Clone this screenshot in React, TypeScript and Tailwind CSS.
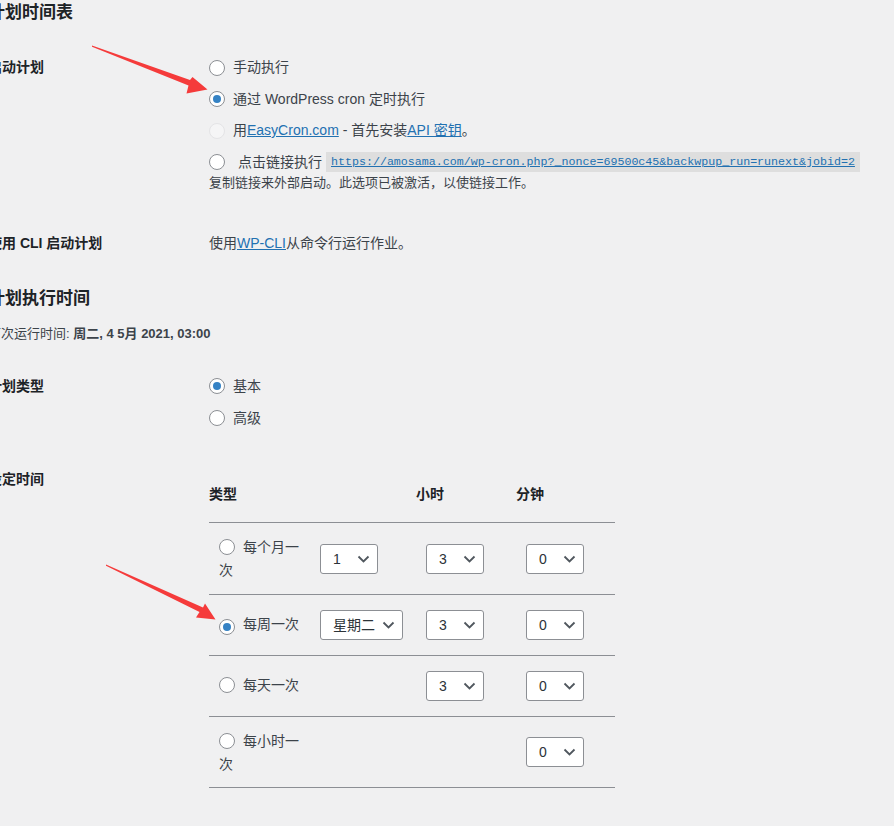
import React from 'react';

const Radio = ({ checked = false, disabled = false }: { checked?: boolean; disabled?: boolean }) => (
    <span
        className={`inline-flex h-4 w-4 shrink-0 items-center justify-center rounded-full border ${
            disabled ? 'border-[#e4e4e6] bg-[#f5f5f6]' : 'border-[#8c8f94] bg-white'
        }`}
    >
        {checked && <span className="h-2 w-2 rounded-full bg-[#3582c4]" />}
    </span>
);

const Chevron = () => (
    <svg width="13" height="8" viewBox="0 0 13 8" className="shrink-0">
        <path d="M1.5 1.5l5 5 5-5" fill="none" stroke="#50575e" strokeWidth="1.8" />
    </svg>
);

const Select = ({ value, wide = false }: { value: string; wide?: boolean }) => (
    <div
        className={`flex h-[30px] ${wide ? 'w-[83px]' : 'w-[58px]'} items-center justify-between rounded-[3px] border border-[#8c8f94] bg-white pl-[12px] pr-[7px] text-[14px] leading-[20px] text-[#2c3338]`}
    >
        <span>{value}</span>
        <Chevron />
    </div>
);

// radio that sits inline with its text, so a long label wraps under the circle
const TypeLabel = ({ text, checked = false }: { text: string; checked?: boolean }) => (
    <div className="w-[91px] text-[14px] leading-[20px] text-[#3c434a]">
        <span className="mr-[8px] mt-[2px] inline-block align-top">
            <Radio checked={checked} />
        </span>
        {text}
    </div>
);

const rows = [
    { text: '每个月一次', day: '1', hour: '3', height: 'h-[72px]' },
    { text: '每周一次', day: '星期二', hour: '3', height: 'h-[61px]', checked: true },
    { text: '每天一次', hour: '3', height: 'h-[61px]' },
    { text: '每小时一次', height: 'h-[71px]' },
];

const App = () => (
    <div className="relative h-[826px] w-[894px] overflow-hidden bg-[#f0f0f1] font-[Liberation_Sans,Noto_Sans_CJK_SC,sans-serif] text-[#3c434a]">
        <div className="ml-[-12px] pt-[3px]">
            <h2 className="h-[20px] text-[17px] font-semibold leading-[20px] text-[#1d2327]">计划时间表</h2>

            {/* 启动计划 */}
            <div className="mt-[29px] flex">
                <div className="w-[221px] shrink-0 pt-[5px] text-[14px] font-semibold leading-[20px] text-[#1d2327]">启动计划</div>
                <div className="text-[14px]">
                    <div className="flex h-[31px] items-center gap-[8px]">
                        <Radio />
                        <span>手动执行</span>
                    </div>
                    <div className="flex h-[32px] items-center gap-[8px]">
                        <Radio checked />
                        <span>通过 WordPress cron 定时执行</span>
                    </div>
                    <div className="flex h-[31px] items-center gap-[8px]">
                        <Radio disabled />
                        <span>
                            用<span className="text-[#2271b1] underline">EasyCron.com</span> - 首先安装
                            <span className="text-[#2271b1] underline">API 密钥</span>。
                        </span>
                    </div>
                    <div className="mt-[6px] flex h-[20px] items-center gap-[8px]">
                        <Radio />
                        <span className="pl-[5px]">点击链接执行</span>
                        <code className="ml-[-4px] h-[20px] bg-[#dedede] px-[5px] font-[Liberation_Mono,monospace] text-[11.65px] leading-[20px] text-[#2271b1] underline">
                            https://amosama.com/wp-cron.php?_nonce=69500c45&amp;backwpup_run=runext&amp;jobid=2
                        </code>
                    </div>
                    <p className="mt-[1px] text-[13px] leading-[20px]">复制链接来外部启动。此选项已被激活，以使链接工作。</p>
                </div>
            </div>

            {/* CLI */}
            <div className="mt-[40px] flex leading-[20px]">
                <div className="w-[221px] shrink-0 text-[14px] font-semibold text-[#1d2327]">使用 CLI 启动计划</div>
                <div className="text-[14px]">
                    使用<span className="text-[#2271b1] underline">WP-CLI</span>从命令行运行作业。
                </div>
            </div>

            <h2 className="mt-[36px] h-[20px] text-[17px] font-semibold leading-[20px] text-[#1d2327]">计划执行时间</h2>
            <p className="mt-[15px] text-[13px] leading-[20px]">
                下次运行时间: <span className="font-semibold">周二, 4 5月 2021, 03:00</span>
            </p>

            {/* 计划类型 */}
            <div className="mt-[26px] flex">
                <div className="w-[221px] shrink-0 pt-[6px] text-[14px] font-semibold leading-[20px] text-[#1d2327]">计划类型</div>
                <div className="text-[14px]">
                    <div className="flex h-[32px] items-center gap-[8px]">
                        <Radio checked />
                        <span>基本</span>
                    </div>
                    <div className="flex h-[32px] items-center gap-[8px]">
                        <Radio />
                        <span>高级</span>
                    </div>
                </div>
            </div>

            {/* 设定时间 */}
            <div className="mt-[35px] flex">
                <div className="w-[221px] shrink-0 text-[14px] font-semibold leading-[20px] text-[#1d2327]">设定时间</div>
                <div className="w-[406px]">
                    <div className="grid h-[54px] grid-cols-[101px_106px_100px_99px] border-b border-[#8c8f94] pt-[15px] text-[14px] font-semibold leading-[20px] text-[#1d2327]">
                        <div>类型</div>
                        <div />
                        <div>小时</div>
                        <div>分钟</div>
                    </div>
                    {rows.map((row) => (
                        <div
                            key={row.text}
                            className={`grid ${row.height} grid-cols-[101px_106px_100px_99px] items-center border-b border-[#8c8f94]`}
                        >
                            <div className="pl-[10px]">
                                <TypeLabel text={row.text} checked={row.checked} />
                            </div>
                            <div className="pl-[10px]">{row.day && <Select value={row.day} wide={row.day.length > 1} />}</div>
                            <div className="pl-[10px]">{row.hour && <Select value={row.hour} />}</div>
                            <div className="pl-[10px]">
                                <Select value="0" />
                            </div>
                        </div>
                    ))}
                </div>
            </div>
        </div>

        {/* annotation arrows */}
        <svg className="pointer-events-none absolute left-0 top-0" width="894" height="826" viewBox="0 0 894 826">
            <polygon
                points="92,45.5 190,80 192.5,77 207.5,89.5 186.5,93.5 188.5,85.5 92,46.8"
                fill="#f53b3b"
            />
            <polygon
                points="106,564.5 203,607.5 205,603.5 215.5,619.5 196,617.5 199.5,612 106,565.8"
                fill="#f53b3b"
            />
        </svg>
    </div>
);

export default App;
